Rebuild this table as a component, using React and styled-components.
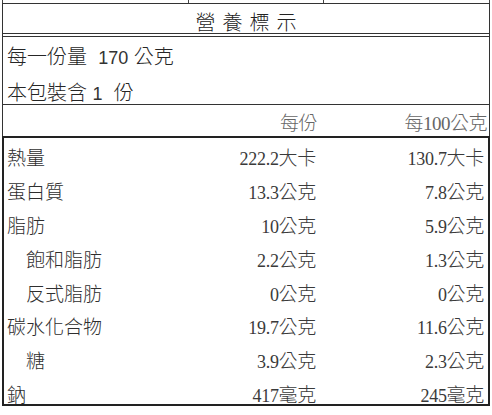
import React from "react";
import styled, { createGlobalStyle } from "styled-components";

const Global = createGlobalStyle`
  html, body { margin: 0; padding: 0; background: #fff; }
  body {
    font-family: "Noto Sans CJK TC", "Noto Sans", sans-serif;
    color: #333;
  }
`;

const Sheet = styled.div`
  width: 488px;
  height: 415px;
  margin-left: 2px;
  background: #fff;
`;

const TopStrip = styled.div`
  height: 3px;
  display: grid;
  grid-template-columns: 186px 135px 1fr;
  border-left: 1px solid #444;
  border-right: 1px solid #444;
`;

const StripCell = styled.div`
  border-right: ${(p) => (p.$last ? "none" : "1px solid #444")};
`;

const Panel = styled.div`
  border: 1px solid #333;
  border-bottom: none;
`;

const Title = styled.div`
  height: 33px;
  box-sizing: border-box;
  padding-top: 6px;
  padding-left: 7px;
  border-bottom: 4px double #333;
  display: flex;
  align-items: center;
  justify-content: center;
  font-size: 20px;
  font-weight: 300;
  letter-spacing: 7px;
  color: #222;
`;

const Serving = styled.div`
  padding-top: 3px;
  border-bottom: 1px solid #333;
`;

const ServingLine = styled.div`
  height: ${(p) => p.$h}px;
  line-height: ${(p) => p.$lh}px;
  padding-left: 4px;
  font-size: 20px;
  font-weight: 300;
  white-space: pre;
  color: #262626;
  font-family: "Liberation Sans", "Noto Sans CJK TC", sans-serif;
`;

const ServingNum = styled.span`
  font-size: 18px;
  font-weight: 400;
  color: #333;
`;

const ColumnHeader = styled.div`
  height: 31px;
  box-sizing: border-box;
  display: grid;
  grid-template-columns: 1fr 150px 170px;
  align-items: end;
  padding: 0 2px 0 3px;
`;

const HeaderCell = styled.div`
  text-align: right;
  font-size: 19px;
  font-weight: 300;
  line-height: 24px;
  color: #666;
  font-family: "Liberation Serif", "Noto Sans CJK TC", serif;
  letter-spacing: -0.5px;
`;

const DataBox = styled.div`
  height: 270px;
  box-sizing: border-box;
  border: 2px solid #222;
  padding: 2px 4px 0 3px;
`;

const Row = styled.div`
  height: 33.8px;
  display: grid;
  grid-template-columns: 1fr 150px 168px;
  align-items: center;
`;

const Label = styled.div`
  font-size: 19px;
  font-weight: 300;
  color: #2e2e2e;
  padding-left: ${(p) => (p.$indent ? "19px" : "0")};
  white-space: nowrap;
`;

const Value = styled.div`
  text-align: right;
  font-size: 19px;
  font-weight: 300;
  color: #3a3a3a;
  font-family: "Liberation Serif", "Noto Sans CJK TC", serif;
  white-space: nowrap;
  letter-spacing: -0.3px;
`;

const Num = styled.span`
  font-size: 18px;
  font-weight: 400;
`;

const rows = [
  { label: "熱量", a: "222.2", au: "大卡", b: "130.7", bu: "大卡" },
  { label: "蛋白質", a: "13.3", au: "公克", b: "7.8", bu: "公克" },
  { label: "脂肪", a: "10", au: "公克", b: "5.9", bu: "公克" },
  { label: "飽和脂肪", indent: true, a: "2.2", au: "公克", b: "1.3", bu: "公克" },
  { label: "反式脂肪", indent: true, a: "0", au: "公克", b: "0", bu: "公克" },
  { label: "碳水化合物", a: "19.7", au: "公克", b: "11.6", bu: "公克" },
  { label: "糖", indent: true, a: "3.9", au: "公克", b: "2.3", bu: "公克" },
  { label: "鈉", a: "417", au: "毫克", b: "245", bu: "毫克" },
];

export default function App() {
  return (
    <>
      <Global />
      <Sheet>
        <TopStrip>
          <StripCell />
          <StripCell />
          <StripCell $last />
        </TopStrip>
        <Panel>
          <Title>營養標示</Title>
          <Serving>
            <ServingLine $h={35} $lh={34}>
              每一份量{"  "}<ServingNum>170</ServingNum> 公克
            </ServingLine>
            <ServingLine $h={29} $lh={37}>
              本包裝含 <ServingNum>1</ServingNum>{"  "}份
            </ServingLine>
          </Serving>
          <ColumnHeader>
            <div />
            <HeaderCell>每份</HeaderCell>
            <HeaderCell>每100公克</HeaderCell>
          </ColumnHeader>
        </Panel>
        <DataBox>
          {rows.map((r) => (
            <Row key={r.label}>
              <Label $indent={r.indent}>{r.label}</Label>
              <Value>
                <Num>{r.a}</Num>
                {r.au}
              </Value>
              <Value>
                <Num>{r.b}</Num>
                {r.bu}
              </Value>
            </Row>
          ))}
        </DataBox>
      </Sheet>
    </>
  );
}
